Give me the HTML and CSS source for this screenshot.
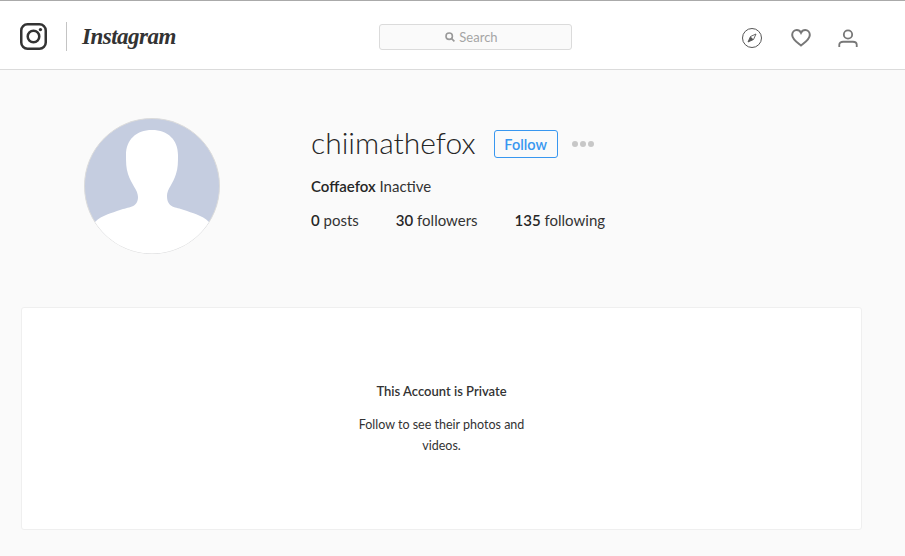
FILE: index.html
```html
<!DOCTYPE html>
<html lang="en">
<head>
    <meta charset="UTF-8">
    <title>chiimathefox - Instagram</title>
    <link rel="stylesheet" href="styles.css">
</head>
<body>
    <header class="topbar">
        <div class="brand">
            <svg class="brand-icon" width="27" height="27" viewBox="0 0 28 28" fill="none" stroke="#333" aria-hidden="true">
                <rect x="1.3" y="1.3" width="25.4" height="25.4" rx="6.5" stroke-width="2.6"/>
                <circle cx="14" cy="14" r="6" stroke-width="2.6"/>
                <circle cx="21.2" cy="6.8" r="1.7" fill="#333" stroke="none"/>
            </svg>
            <span class="brand-line"></span>
            <span class="brand-name">Instagram</span>
        </div>
        <div class="search">
            <svg width="10" height="10" viewBox="0 0 10 10" fill="none" stroke="#999" stroke-width="1.6" aria-hidden="true">
                <circle cx="4.2" cy="4.2" r="3.2"/>
                <path d="M6.6 6.6 9.4 9.4"/>
            </svg>
            <span>Search</span>
        </div>
        <nav class="nav-icons">
            <svg class="nav-compass" width="20" height="20" viewBox="0 0 20 20" fill="none" stroke="#555" aria-hidden="true">
                <circle cx="10" cy="10" r="9.500"/>
                <path d="M14 6 11.500 11.500 6 14 8.500 8.500Z" stroke-width="0.900"/>
                <path d="M8.500 8.500 11.500 11.500 6 14Z" fill="#555" stroke="none"/>
            </svg>
            <svg class="nav-heart" width="20" height="18" viewBox="0 0 22 20" fill="none" stroke="#777" stroke-width="2.2" aria-hidden="true">
                <path d="M11 18.400C7.500 15.600 1.200 11.400 1.200 6.600 1.200 3.400 3.600 1.200 6.300 1.200 8.300 1.200 10 2.300 11 4.200 12 2.300 13.700 1.200 15.700 1.200 18.400 1.200 20.800 3.400 20.800 6.600 20.800 11.400 14.500 15.600 11 18.400Z"/>
            </svg>
            <svg width="20" height="19" viewBox="0 0 22 20" fill="none" stroke="#777" stroke-width="2" aria-hidden="true">
                <circle cx="11" cy="5.600" r="4.600"/>
                <path d="M1.400 19.400V17C1.400 14.800 3.400 13.600 5.600 13.600H16.400C18.600 13.600 20.600 14.800 20.600 17V19.400"/>
            </svg>
        </nav>
    </header>

    <main class="page">
        <section class="profile">
            <div class="avatar-col">
                <svg class="avatar" width="136" height="136" viewBox="0 0 136 136" aria-hidden="true">
                    <circle cx="68" cy="68" r="67.500" fill="#c5cde0" stroke="#dbdbdb"/>
                    <path d="M11 104C18 97 28 95 36 92 44 89 54 90 54 79 54 72 47 66 44 56 42 50 42 44 42 37 42 22 52 12 68 12 84 12 94 22 94 37 94 44 94 50 92 56 89 66 83 71 83 78 83 90 92 89 100 92 108 95 118 97 125 104 113 123 92 135.500 68 135.500 44 135.500 23 123 11 104Z" fill="#fff"/>
                </svg>
            </div>
            <div class="info">
                <div class="title-row">
                    <h1>chiimathefox</h1>
                    <button class="follow">Follow</button>
                    <div class="dots"><i></i><i></i><i></i></div>
                </div>
                <p class="bio"><b>Coffaefox</b> Inactive</p>
                <ul class="stats">
                    <li><b>0</b> posts</li>
                    <li><b>30</b> followers</li>
                    <li><b>135</b> following</li>
                </ul>
            </div>
        </section>

        <section class="private-card">
            <h2>This Account is Private</h2>
            <p>Follow to see their photos and videos.</p>
        </section>
    </main>
</body>
</html>
```

FILE: styles.css
```css
* {
    box-sizing: border-box;
}

body {
    margin: 0;
    height: 556px;
    overflow: hidden;
    font-family: "Lato", Arial, sans-serif;
    color: #333;
    background-color: #fafafa;
}

b {
    font-weight: 600;
    color: #262626;
}

.topbar {
    height: 70px;
    display: flex;
    align-items: center;
    padding: 0 47px 0 20px;
    background-color: white;
    border-top: 1px solid #aaa;
    border-bottom: 1px solid #dbdbdb;
}

.brand {
    width: 359px;
    display: flex;
    align-items: center;
    margin-top: 3px;
}

.brand-line {
    width: 1px;
    height: 29px;
    margin: 0 15px 0 19px;
    background-color: #c4c4c4;
}

.brand-name {
    font-family: "Liberation Serif", serif;
    font-style: italic;
    font-weight: bold;
    font-size: 23px;
    letter-spacing: -0.5px;
    color: #333;
}

.search {
    width: 193px;
    height: 26px;
    margin-top: 4px;
    padding: 0 8px 1px 0;
    display: flex;
    align-items: center;
    justify-content: center;
    gap: 4px;
    font-size: 13px;
    color: #a5a5a5;
    background-color: #fafafa;
    border: 1px solid #dbdbdb;
    border-radius: 3px;
}

.nav-icons {
    display: flex;
    align-items: center;
    gap: 27px;
    margin-top: 6px;
    margin-left: auto;
}

.nav-heart {
    margin-left: 2px;
}

.page {
    padding: 0 43px 0 21px;
}

.profile {
    height: 237px;
    display: flex;
    padding-top: 48px;
}

.avatar-col {
    width: 290px;
    padding-left: 63px;
}

.avatar {
    display: block;
}

.info {
    flex: 1;
}

h1 {
    margin: 0;
    padding-bottom: 4px;
    font-size: 30px;
    font-weight: 300;
    line-height: 40px;
    color: #262626;
}

.title-row {
    display: flex;
    align-items: center;
    gap: 18px;
    margin-top: 4px;
}

.follow {
    width: 64px;
    height: 28px;
    padding: 0;
    font-family: inherit;
    font-size: 14.5px;
    font-weight: 600;
    color: #3897f0;
    background: transparent;
    border: 1px solid #3897f0;
    border-radius: 3px;
}

.dots {
    display: flex;
    gap: 2px;
    margin-left: -4px;
}

.dots i {
    width: 6px;
    height: 6px;
    border-radius: 50%;
    background-color: #c7c7c7;
}

.bio {
    margin: 10px 0 0;
    font-size: 15px;
    line-height: 20px;
}

.stats {
    display: flex;
    gap: 37px;
    margin: 14px 0 0;
    padding: 0;
    list-style: none;
    font-size: 15px;
    line-height: 20px;
}

.private-card {
    height: 223px;
    width: 841px;
    padding-top: 74px;
    text-align: center;
    background-color: white;
    border: 1px solid #efefef;
    border-radius: 3px;
}

h2 {
    margin: 0;
    font-size: 13px;
    font-weight: 600;
    line-height: 18px;
}

.private-card p {
    width: 190px;
    margin: 14px auto 0;
    font-size: 12.5px;
    line-height: 21px;
}
```
